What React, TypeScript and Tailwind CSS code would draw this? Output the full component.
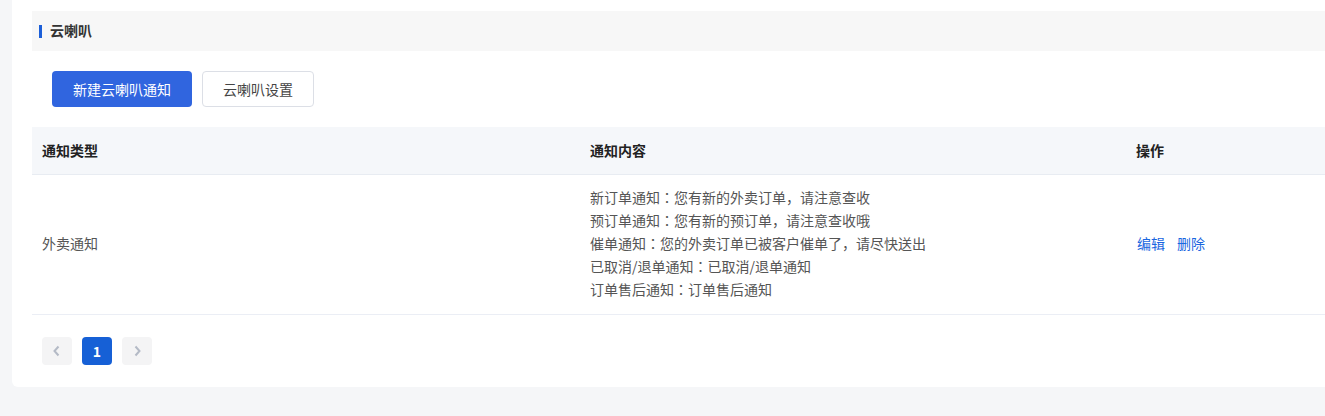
const lines = [
  '新订单通知：您有新的外卖订单，请注意查收',
  '预订单通知：您有新的预订单，请注意查收哦',
  '催单通知：您的外卖订单已被客户催单了，请尽快送出',
  '已取消/退单通知：已取消/退单通知',
  '订单售后通知：订单售后通知',
]

// full-width punctuation drawn with the JP face so the colon sits centred
function Line({ text }: { text: string }) {
  const parts = text.split(/([：，])/)
  return (
    <div>
      {parts.map((p, i) =>
        p === '：' || p === '，' ? (
          <span key={i} style={{ fontFamily: '"Noto Sans CJK JP", sans-serif' }}>
            {p}
          </span>
        ) : (
          <span key={i}>{p}</span>
        ),
      )}
    </div>
  )
}

export default function App() {
  return (
    <div
      className="h-[416px] w-[1325px] overflow-hidden bg-[#f5f6f8]"
      style={{ fontFamily: '"Noto Sans CJK SC", "Noto Sans", sans-serif' }}
    >
      <div className="ml-3 w-[1400px] rounded-b-md bg-white pt-[11px] pb-[22px] pl-5">
        <div className="flex h-10 items-center bg-[#f7f7f7] pl-[7px]">
          <span className="h-[13px] w-[3px] bg-[#1c5fd8]" />
          <span className="ml-2 -mt-px text-[14px] font-semibold text-[#333]">云喇叭</span>
        </div>

        <div className="flex gap-[10px] pt-5 pb-5 pl-5">
          <button
            type="button"
            className="h-9 w-[140px] rounded bg-[#3065df] text-[14px] text-white"
          >
            新建云喇叭通知
          </button>
          <button
            type="button"
            className="h-9 w-[112px] rounded border border-[#dcdfe6] bg-white text-[14px] text-[#444]"
          >
            云喇叭设置
          </button>
        </div>

        <div className="flex h-12 items-center border-b border-[#e8ecf2] bg-[#f5f7fa] text-[14px] font-bold text-[#222]">
          <div className="w-[548px] pl-[10px]">通知类型</div>
          <div className="w-[546px] pl-[10px]">通知内容</div>
          <div className="flex-1 pl-[10px]">操作</div>
        </div>

        <div className="flex items-center border-b border-[#ebeef5] pt-[11px] pb-[13px] text-[14px] text-[#555]">
          <div className="w-[548px] pl-[10px]">外卖通知</div>
          <div className="w-[546px] pl-[10px] leading-[23px]">
            {lines.map((l) => (
              <Line key={l} text={l} />
            ))}
          </div>
          <div className="flex flex-1 gap-[12px] pl-[11px] text-[#1a66e0]">
            <span>编辑</span>
            <span>删除</span>
          </div>
        </div>

        <div className="flex gap-[10px] pt-[22px] pl-[10px]">
          <button
            type="button"
            className="flex h-7 w-[30px] items-center justify-center rounded-sm bg-[#f4f4f5] text-[#b4bac6]"
          >
            <svg width="12" height="12" viewBox="0 0 12 12" fill="none" stroke="currentColor" strokeWidth="2">
              <path d="M7.5 1.5 3.5 6l4 4.5" />
            </svg>
          </button>
          <button
            type="button"
            className="h-7 w-[30px] rounded-sm bg-[#1660d6] text-[14px] font-bold text-white"
          >
            1
          </button>
          <button
            type="button"
            className="flex h-7 w-[30px] items-center justify-center rounded-sm bg-[#f4f4f5] text-[#b4bac6]"
          >
            <svg width="12" height="12" viewBox="0 0 12 12" fill="none" stroke="currentColor" strokeWidth="2">
              <path d="M4.5 1.5 8.5 6l-4 4.5" />
            </svg>
          </button>
        </div>
      </div>
    </div>
  )
}
